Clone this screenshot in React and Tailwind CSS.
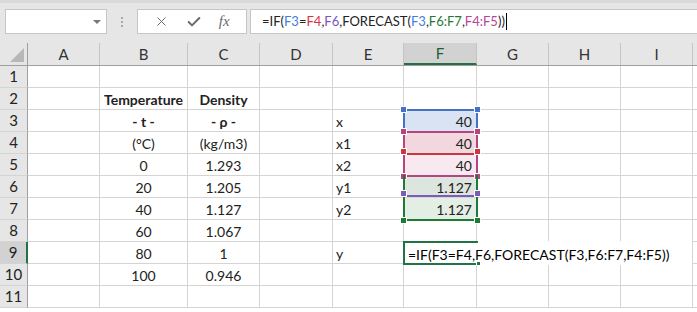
import React from 'react'
import { X, Check } from 'lucide-react'

const cols = [
  { id: 'A', w: 'w-[72px]' },
  { id: 'B', w: 'w-[88px]' },
  { id: 'C', w: 'w-[72px]' },
  { id: 'D', w: 'w-[73px]' },
  { id: 'E', w: 'w-[71px]' },
  { id: 'F', w: 'w-[73px]' },
  { id: 'G', w: 'w-[72px]' },
  { id: 'H', w: 'w-[72px]' },
  { id: 'I', w: 'w-[72px]' },
]

const rows = [
  {},
  { B: 'Temperature', C: 'Density', bold: true },
  { B: '- t -', C: '- ρ -', bold: true, E: 'x', F: '40', fill: 'bg-[#dae3f3]' },
  { B: '(°C)', C: '(kg/m3)', E: 'x1', F: '40', fill: 'bg-[#f2d7df]' },
  { B: '0', C: '1.293', E: 'x2', F: '40', fill: 'bg-[#f7e9ef]' },
  { B: '20', C: '1.205', E: 'y1', F: '1.127', fill: 'bg-[#dde5df]' },
  { B: '40', C: '1.127', E: 'y2', F: '1.127', fill: 'bg-[#e3efe5]' },
  { B: '60', C: '1.067' },
  { B: '80', C: '1', E: 'y' },
  { B: '100', C: '0.946' },
  {},
]

const font = { fontFamily: 'Lato, "Noto Sans", sans-serif' }

// little squares on the ends of a reference border line
function Ends({ color, bottom }) {
  const pos = bottom ? '-bottom-[5px]' : '-top-[5px]'
  return (
    <>
      <div className={`absolute ${pos} -left-[5px] w-[7px] h-[7px] border border-white ${color}`} />
      <div className={`absolute ${pos} -right-[5px] w-[7px] h-[7px] border border-white ${color}`} />
    </>
  )
}

function FormulaRefs() {
  return (
    <>
      <span>=IF(</span><span className="text-[#3f7fe0]">F3</span><span>=</span><span className="text-[#d9343e]">F4</span>
      <span>,</span><span className="text-[#7b55c4]">F6</span><span>,FORECAST(</span><span className="text-[#3f7fe0]">F3</span>
      <span>,</span><span className="text-[#1f7a36]">F6:F7</span><span>,</span><span className="text-[#b5459a]">F4:F5</span><span>))</span>
    </>
  )
}

export default function App() {
  return (
    <div className="relative w-[697px] h-[312px] overflow-hidden bg-white text-[#222] text-[14px]" style={font}>
      {/* formula bar */}
      <div className="h-[43px] bg-[#e6e6e6] border-t-[3px] border-[#dadada] flex items-start pt-[6px]">
        <div className="ml-[5px] w-[102px] h-[25px] bg-white border border-[#c6c6c6] flex items-center justify-end pr-[5px]">
          <div className="w-0 h-0 border-l-[4px] border-r-[4px] border-t-[4px] border-l-transparent border-r-transparent border-t-[#777]" />
        </div>
        <div className="w-[30px] h-[25px] flex flex-col items-center justify-center gap-[2px]">
          <div className="w-[2px] h-[2px] bg-[#a8a8a8]" />
          <div className="w-[2px] h-[2px] bg-[#a8a8a8]" />
          <div className="w-[2px] h-[2px] bg-[#a8a8a8]" />
        </div>
        <div className="w-[110px] h-[25px] bg-white border border-[#c6c6c6] flex items-center justify-around px-[8px] text-[#6b6b6b]">
          <X size={15} strokeWidth={1.6} />
          <Check size={16} strokeWidth={3} />
          <span className="text-[15px] italic" style={{ fontFamily: '"Liberation Serif", serif' }}>fx</span>
        </div>
        <div className="ml-[3px] flex-1 h-[25px] bg-white border border-[#c6c6c6] border-r-0 flex items-center pl-[11px] text-[13px] text-[#222]">
          <FormulaRefs />
          <span className="ml-[1px] w-[1px] h-[17px] bg-black" />
        </div>
      </div>

      {/* column headers */}
      <div className="flex h-[23px] bg-[#e6e6e6] border-b border-[#9f9f9f]">
        <div className="w-[28px] border-r border-[#9f9f9f] flex items-end justify-end p-[3px]">
          <div className="w-0 h-0 border-b-[14px] border-l-[14px] border-b-[#b7b7b7] border-l-transparent" />
        </div>
        {cols.map((c) => (
          <div
            key={c.id}
            className={`${c.w} shrink-0 border-r border-[#c4c4c4] flex items-center justify-center text-[15px] ${c.id === 'F' ? 'bg-[#d2d2d2] border-b-2 border-b-[#217346] text-[#1f5f38]' : 'text-[#333]'}`}
          >
            {c.id}
          </div>
        ))}
        <div className="flex-1" />
      </div>

      {/* grid */}
      {rows.map((r, i) => (
        <div key={i} className="flex h-[22px]">
          <div className={`w-[28px] shrink-0 border-b border-[#d4d4d4] flex items-center justify-center text-[15px] ${i === 8 ? 'bg-[#d2d2d2] border-r-2 border-r-[#217346]' : 'bg-[#e6e6e6] border-r border-r-[#9f9f9f]'}`}>
            {i + 1}
          </div>
          {cols.map((c) => {
            const v = r[c.id]
            const align = c.id === 'E' ? 'justify-start pl-[3px]' : c.id === 'F' ? 'justify-end pr-[4px]' : 'justify-center'
            return (
              <div
                key={c.id}
                className={`${c.w} shrink-0 border-r border-b border-[#d4d4d4] flex items-center pt-[2px] whitespace-nowrap ${align} ${r.bold && (c.id === 'B' || c.id === 'C') ? 'font-bold' : ''} ${c.id === 'F' && r.fill ? r.fill : ''}`}
              >
                {v}
              </div>
            )
          })}
          <div className="flex-1 border-b border-[#d4d4d4]" />
        </div>
      ))}

      {/* reference highlights drawn over column F, rows 3-7 */}
      <div className="absolute left-[403px] top-[109px] w-[75px] flex flex-col">
        <div className="relative h-[24px] border-2 border-[#4472c4]">
          <Ends color="bg-[#4472c4]" />
        </div>
        <div className="relative -mt-[2px] h-[46px] border-2 border-[#b5457f]">
          <Ends color="bg-[#b5457f]" />
          <div className="relative mt-[20px] h-[2px] bg-[#c9373f]">
            <Ends color="bg-[#c9373f]" />
          </div>
          <Ends color="bg-[#b5457f]" bottom />
        </div>
        <div className="relative -mt-[2px] h-[46px] border-2 border-t-0 border-[#1f7a36]">
          <div className="relative mt-[20px] h-[2px] bg-[#7d5cb8]">
            <Ends color="bg-[#7d5cb8]" />
          </div>
          <Ends color="bg-[#1f7a36]" bottom />
        </div>
      </div>

      {/* in-cell edit of F9 */}
      <div className="absolute left-[403px] top-[241px] w-[289px] h-[24px] bg-white flex items-center pl-[5px] pt-[2px] text-[14px] text-black whitespace-nowrap">
        =IF(F3=F4,F6,FORECAST(F3,F6:F7,F4:F5))
        <div className="absolute left-0 top-0 w-[75px] h-[24px] border-2 border-r-0 border-[#217346]">
          <div className="absolute -right-[3px] -bottom-[3px] w-[5px] h-[5px] bg-[#217346] border border-white" />
        </div>
      </div>
    </div>
  )
}
